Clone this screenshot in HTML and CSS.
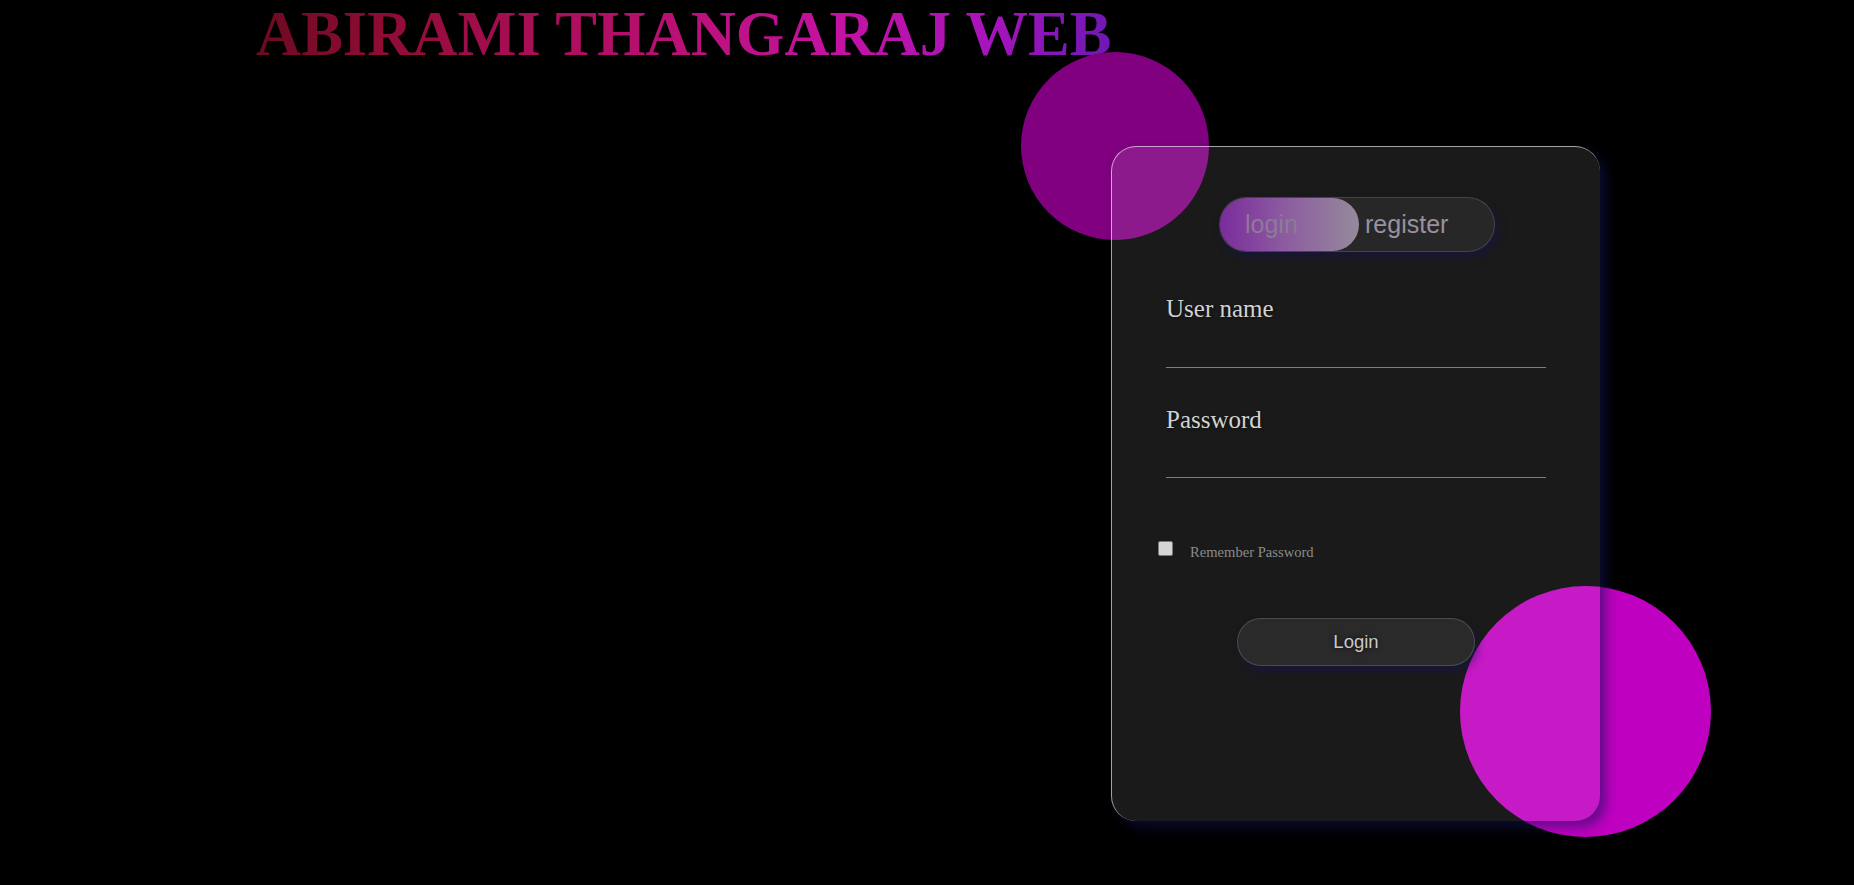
FILE: index.html
```html
<!DOCTYPE html>
<html lang="en">
<head>
<meta charset="utf-8">
<title>Abirami Thangaraj Web</title>
<link rel="stylesheet" href="styles.css">
</head>
<body>
<h1 class="brand">ABIRAMI THANGARAJ WEB</h1>
<main class="stage">
  <div class="card-wrap">
    <span class="blob blob-top"></span>
    <span class="blob blob-bottom"></span>
    <section class="card">
      <div class="toggle">
        <button class="toggle-btn active" type="button">login</button>
        <button class="toggle-btn" type="button">register</button>
      </div>
      <form class="form">
        <div class="field">
          <label class="field-label" for="user">User name</label>
          <input class="field-input" id="user" type="text">
        </div>
        <div class="field">
          <label class="field-label" for="pass">Password</label>
          <input class="field-input" id="pass" type="password">
        </div>
        <div class="remember">
          <input class="check" type="checkbox" id="rem">
          <label class="remember-text" for="rem">Remember Password</label>
        </div>
        <button class="submit" type="button">Login</button>
      </form>
    </section>
  </div>
</main>
</body>
</html>
```

FILE: styles.css
```css
html, body {
  margin: 0;
  padding: 0;
}
body {
  background: #000;
  height: 885px;
  overflow: hidden;
  font-family: "Liberation Serif", "Times New Roman", serif;
}
.brand {
  margin: 0 0 0 256px;
  padding-top: 3px;
  font-family: "Liberation Serif", "Times New Roman", serif;
  font-weight: bold;
  font-size: 62.5px;
  line-height: 62px;
  white-space: nowrap;
  display: inline-block;
  background: linear-gradient(100deg, #6a0a20 0%, #8e0c34 15%, #a80e55 32%, #bb1078 50%, #c412a2 68%, #a814bc 85%, #6c18b4 100%);
  -webkit-background-clip: text;
  background-clip: text;
  color: transparent;
}
.stage {
  display: flex;
  justify-content: flex-end;
  padding-right: 254px;
  margin-top: 81px;
}
.card-wrap {
  position: relative;
  width: 489px;
  height: 675px;
}
.blob {
  position: absolute;
  border-radius: 50%;
  z-index: 0;
}
.blob-top {
  width: 188px;
  height: 188px;
  left: -90px;
  top: -94px;
  background: #800080;
}
.blob-bottom {
  width: 251px;
  height: 251px;
  left: 349px;
  top: 440px;
  background: #c000c0;
}
.card {
  position: relative;
  z-index: 1;
  box-sizing: border-box;
  width: 489px;
  height: 675px;
  border-radius: 25px;
  background: rgba(255, 255, 255, 0.1);
  border-top: 1px solid rgba(255, 255, 255, 0.6);
  border-left: 1px solid rgba(255, 255, 255, 0.6);
  box-shadow: 6px 6px 12px rgba(20, 18, 90, 0.55);
  padding: 50px 0 0 54px;
}
.toggle {
  box-sizing: border-box;
  width: 276px;
  height: 55px;
  margin-left: 53px;
  display: flex;
  border-radius: 30px;
  background: rgba(255, 255, 255, 0.06);
  border: 1px solid rgba(255, 255, 255, 0.14);
  box-shadow: 3px 5px 10px rgba(20, 18, 90, 0.45);
}
.toggle-btn {
  border: 0;
  background: transparent;
  font-family: "Liberation Sans", Arial, sans-serif;
  font-size: 25px;
  color: #9a909f;
  padding: 0 0 0 6px;
  display: flex;
  align-items: center;
  height: 100%;
  cursor: pointer;
}
.toggle-btn.active {
  width: 139px;
  padding-left: 25px;
  border-radius: 30px;
  background: linear-gradient(90deg, #7a2c9c 0%, #8c5aa0 45%, #958a9c 100%);
  color: #8d7b96;
}
.form {
  display: flex;
  flex-direction: column;
  margin-top: 42px;
}
.field {
  display: flex;
  flex-direction: column;
  width: 380px;
  margin-bottom: 37px;
}
.field-label {
  font-size: 25px;
  line-height: 30px;
  height: 30px;
  color: #d2d2d2;
  text-shadow: 1px 1px 3px rgba(0, 0, 0, 0.5);
}
.field-input {
  box-sizing: border-box;
  height: 43.5px;
  width: 380px;
  background: transparent;
  border: 0;
  border-bottom: 1px solid #7e7e7e;
  outline: none;
  color: #ddd;
  font-size: 18px;
  padding: 0;
}
.remember {
  display: flex;
  align-items: flex-start;
  margin-top: 26px;
  height: 19px;
}
.check {
  -webkit-appearance: none;
  appearance: none;
  box-sizing: border-box;
  width: 15px;
  height: 15px;
  margin: 0 0 0 -8px;
  border: 1px solid #7a7a7a;
  border-radius: 2px;
  background: #d6d6d6;
}
.remember-text {
  margin: 3px 0 0 17px;
  font-size: 14.6px;
  line-height: 17px;
  color: #8a8a8a;
}
.submit {
  box-sizing: border-box;
  width: 238px;
  height: 48px;
  margin: 58px 0 0 71px;
  border-radius: 30px;
  border: 1px solid rgba(255, 255, 255, 0.16);
  background: #2a2a2a;
  box-shadow: 3px 5px 9px rgba(20, 18, 90, 0.45);
  font-family: "Liberation Sans", Arial, sans-serif;
  font-size: 18.5px;
  color: #c9c9c9;
  text-shadow: 0 0 5px rgba(0, 0, 0, 0.8);
  cursor: pointer;
}
```
